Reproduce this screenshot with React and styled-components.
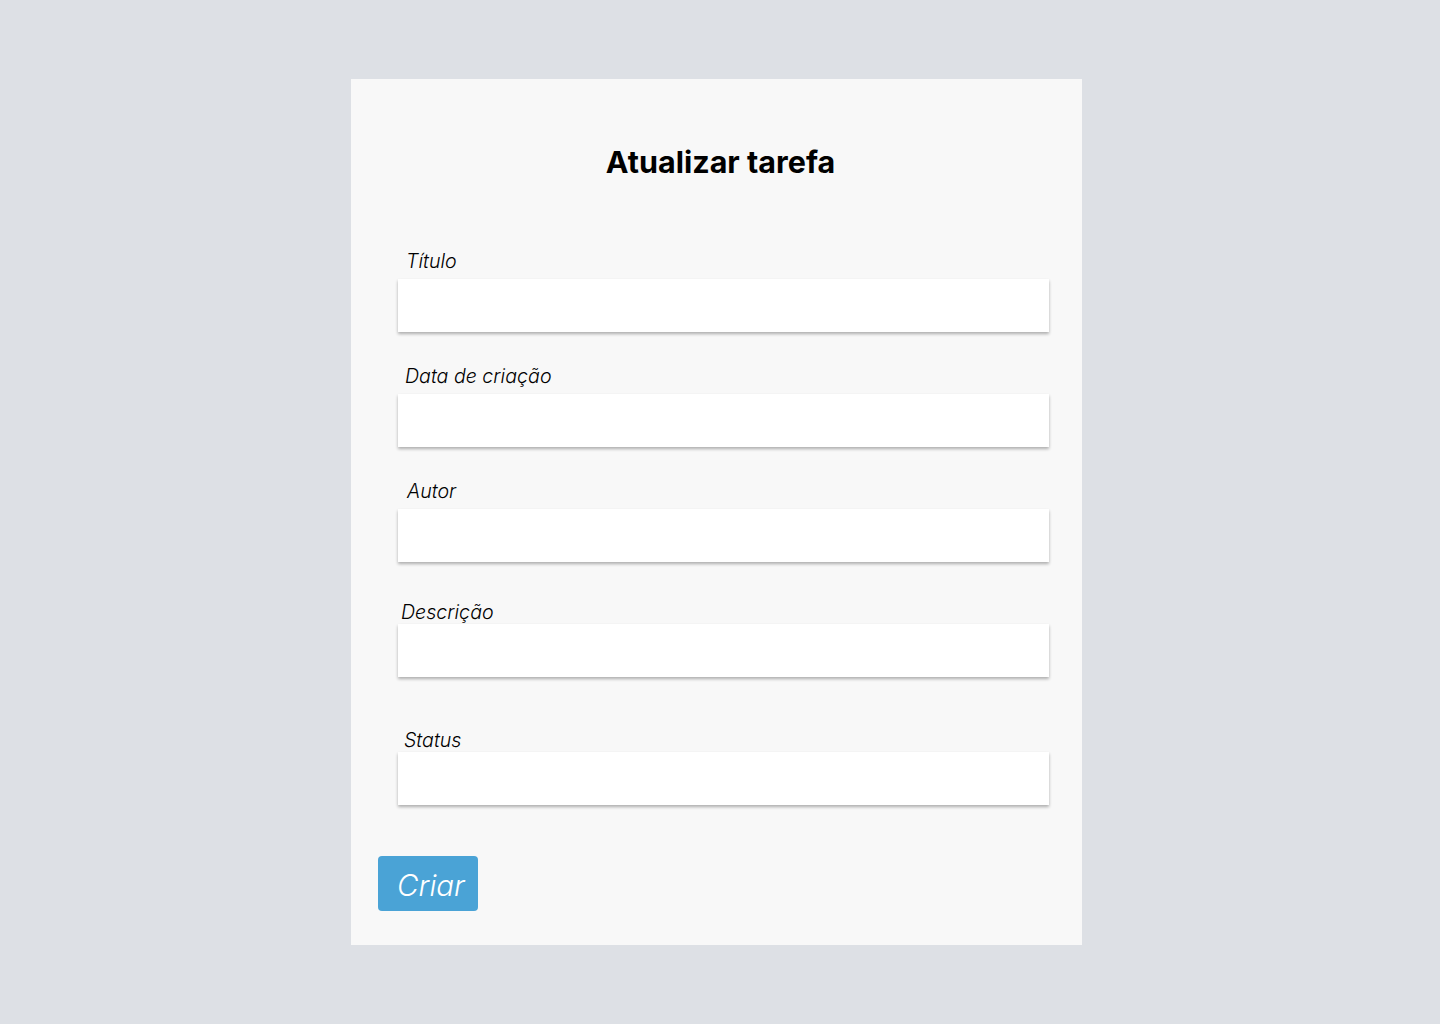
import React from "react";
import styled, { createGlobalStyle } from "styled-components";

const Global = createGlobalStyle`
  body {
    margin: 0;
    background: #dde0e5;
    font-family: Inter, "Noto Sans", sans-serif;
  }
`;

const Page = styled.div`
  min-height: 1024px;
  padding-top: 79px;
  box-sizing: border-box;
  display: flex;
  justify-content: center;
`;

const Card = styled.form`
  width: 731px;
  height: 866px;
  margin-left: -7px;
  box-sizing: border-box;
  background: #f8f8f8;
  padding: 65px 0 0 0;
  display: flex;
  flex-direction: column;
`;

const Title = styled.h1`
  margin: 0 0 0 8px;
  font-size: 30.5px;
  line-height: 36px;
  font-weight: 700;
  color: #000;
  text-align: center;
`;

const Field = styled.div`
  display: flex;
  flex-direction: column;
  margin-top: ${(p) => p.$top}px;
  margin-left: 47px;
`;

const Label = styled.label`
  font-size: 19.6px;
  line-height: 24px;
  font-weight: 300;
  font-style: italic;
  color: #000;
  padding-left: ${(p) => p.$indent}px;
  margin-bottom: ${(p) => p.$gap}px;
`;

const Input = styled.input`
  width: 651px;
  height: 53px;
  box-sizing: border-box;
  border: none;
  outline: none;
  background: #fff;
  box-shadow: 0 2px 3px rgba(0, 0, 0, 0.3);
  font-family: inherit;
  font-size: 18px;
  padding: 0 12px;
`;

const Button = styled.button`
  width: 100px;
  height: 55px;
  margin: 51px 0 0 27px;
  border: none;
  border-radius: 4px;
  background: #4aa3d6;
  color: #fff;
  font-family: inherit;
  font-size: 29.5px;
  font-weight: 300;
  font-style: italic;
  padding: 2px 0 0 19px;
  text-align: left;
  cursor: pointer;
`;

const fields = [
  { label: "Título", top: 69, indent: 8, gap: 6 },
  { label: "Data de criação", top: 32, indent: 7, gap: 6 },
  { label: "Autor", top: 32, indent: 9, gap: 6 },
  { label: "Descrição", top: 38, indent: 3, gap: 0 },
  { label: "Status", top: 51, indent: 6, gap: 0 },
];

export default function App() {
  return (
    <>
      <Global />
      <Page>
        <Card onSubmit={(e) => e.preventDefault()}>
          <Title>Atualizar tarefa</Title>
          {fields.map((f) => (
            <Field key={f.label} $top={f.top}>
              <Label $indent={f.indent} $gap={f.gap}>
                {f.label}
              </Label>
              <Input type="text" />
            </Field>
          ))}
          <Button type="submit">Criar</Button>
        </Card>
      </Page>
    </>
  );
}
